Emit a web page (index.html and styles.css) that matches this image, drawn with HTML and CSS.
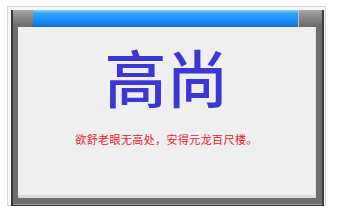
FILE: index.html
```html
<!DOCTYPE html>
<html lang="zh-CN">
<head>
    <meta charset="UTF-8">
    <title>高尚</title>
    <link rel="stylesheet" href="styles.css">
</head>
<body>
    <div class="window">
        <div class="frame">
            <div class="titlebar">
                <span class="cap cap-l"></span>
                <span class="bar"></span>
                <span class="cap cap-r"></span>
            </div>
            <div class="body">
                <div class="panel">
                    <h1 class="title">高尚</h1>
                    <p class="verse">欲舒老眼无高处，安得元龙百尺楼。</p>
                </div>
            </div>
        </div>
    </div>
</body>
</html>
```

FILE: styles.css
```css
*{
    margin: 0;
    padding: 0;
}
html,body{
    width: 100%;
    height: 100%;
    background: #fff;
}
body{
    padding: 6px 0 0 7px;
    box-sizing: border-box;
    font-family: "Noto Sans CJK SC", "Noto Sans", sans-serif;
}
.window{
    width: 319px;
    height: 200px;
    padding: 3px 1px 0 3px;
    border: 1px solid #d6d6d6;
    border-bottom-color: #c8c8c8;
    background: #f7f7f7;
    box-sizing: border-box;
}
.frame{
    height: 100%;
    display: flex;
    flex-direction: column;
    background: #6e6e6e;
    border-left: 2px solid #383838;
    border-right: 2px solid #3c3c3c;
    border-bottom: 1px solid #333;
    box-shadow: inset 0 -1px 0 #a0a0a0;
}
.titlebar{
    height: 17px;
    display: flex;
    flex: none;
}
.cap{
    background: linear-gradient(#a8a8a8, #8a8a8a 40%, #6a6a6a);
}
.cap-l{
    width: 20px;
}
.cap-r{
    width: 23px;
    border-left: 1px solid #c0c0c0;
}
.bar{
    flex: 1;
    background: linear-gradient(#8fd6ff, #2ea4ff 20%, #1490fb 60%, #0f80e6 85%, #2a6fb8);
}
.body{
    flex: 1;
    padding: 0 6px 7px 5px;
    display: flex;
}
.panel{
    flex: 1;
    background: #efefef;
    border-bottom: 3px solid #dadada;
    border-right: 1px solid #e0e0e0;
    display: flex;
    flex-direction: column;
    align-items: center;
}
.title{
    margin-top: 9px;
    font-size: 62px;
    font-weight: 500;
    line-height: 80px;
    color: #3b37d0;
}
.verse{
    margin-top: 16px;
    font-size: 11px;
    line-height: 14px;
    letter-spacing: 0.4px;
    color: #e4202e;
}
```
